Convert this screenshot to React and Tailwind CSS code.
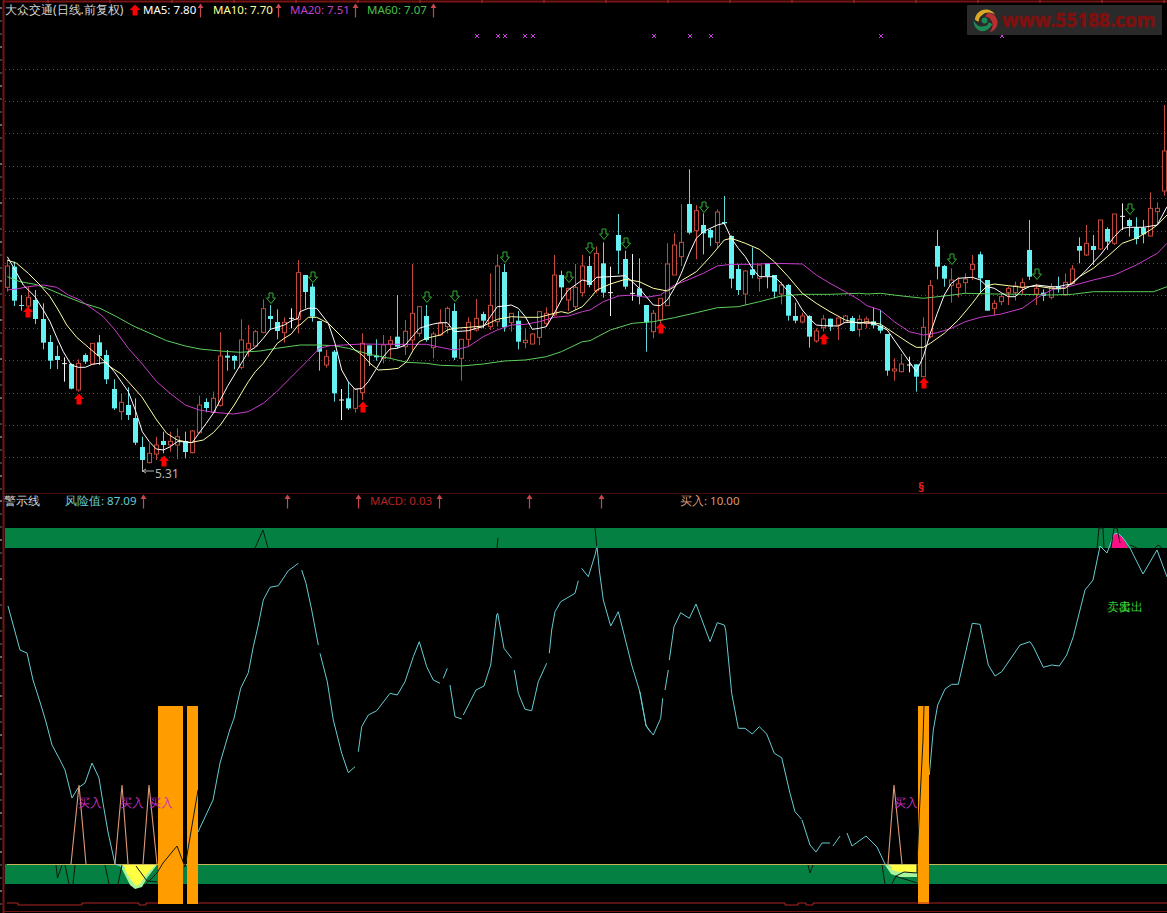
import React from "react";

// candle rows are read off 3x crops: [x, kind, bodyTop, bodyBottom, wickTop, wickBottom]
const fromCrop = (ox, oy, rows) =>
  rows.map(([x, k, a, b, c, d]) => ({
    x: Math.round(ox + x / 3),
    k,
    a: oy + a / 3,
    b: oy + b / 3,
    c: oy + c / 3,
    d: oy + d / 3,
  }));

const candles = [
  ...fromCrop(0, 250, [
    [22, "r", 48, 112, 30, 125], [43, "c", 50, 152, 35, 168], [64, "c", 165, 168, 135, 182], [85, "r", 142, 168, 110, 175],
    [106, "c", 150, 207, 120, 222], [130, "c", 207, 278, 160, 298], [151, "c", 276, 332, 255, 357], [172, "c", 318, 330, 287, 357],
    [193, "w", 341, 343, 322, 395], [214, "c", 342, 416, 340, 418], [235, "r", 340, 420, 328, 425], [256, "c", 315, 335, 310, 342],
    [277, "r", 280, 342, 280, 342], [298, "c", 277, 318, 255, 345], [319, "c", 315, 388, 300, 402], [343, "c", 417, 475, 388, 480],
    [364, "r", 457, 485, 430, 510], [385, "c", 465, 495, 412, 510], [406, "c", 504, 578, 445, 585], [427, "c", 591, 630, 560, 660],
    [448, "r", 610, 638, 580, 640], [469, "r", 585, 612, 560, 630], [490, "c", 573, 585, 545, 610], [511, "r", 574, 585, 545, 605],
    [532, "r", 560, 585, 535, 628], [556, "c", 574, 606, 545, 625], [577, "r", 543, 608, 540, 610], [598, "r", 465, 548, 437, 550],
    [619, "c", 456, 474, 445, 487], [640, "r", 445, 487, 425, 490], [661, "r", 318, 466, 247, 470], [682, "c", 317, 323, 300, 362],
    [703, "c", 318, 332, 315, 358], [724, "r", 270, 352, 208, 358], [745, "r", 280, 297, 225, 320], [766, "r", 245, 288, 240, 290],
    [790, "r", 176, 247, 148, 250], [811, "c", 198, 207, 165, 240], [832, "c", 216, 243, 178, 268], [853, "r", 217, 248, 202, 278],
    [874, "w", 205, 208, 175, 235], [895, "r", 68, 208, 30, 250],
  ]),
  ...fromCrop(300, 200, [
    [16, "c", 225, 276, 225, 325], [37, "c", 260, 350, 250, 365], [58, "c", 363, 455, 363, 512], [79, "r", 470, 495, 450, 503],
    [103, "c", 455, 580, 450, 605], [124, "w", 600, 602, 567, 660], [145, "c", 595, 625, 545, 630], [166, "r", 567, 625, 567, 638],
    [187, "r", 430, 578, 400, 600], [208, "c", 436, 467, 436, 498], [229, "c", 467, 472, 418, 482], [250, "r", 435, 475, 405, 490],
    [271, "r", 422, 432, 408, 475], [292, "c", 410, 440, 285, 445], [316, "r", 394, 440, 360, 465], [337, "r", 340, 420, 192, 450],
    [358, "r", 320, 400, 318, 410], [379, "c", 348, 420, 315, 425], [400, "r", 402, 443, 395, 475], [421, "r", 370, 405, 328, 408],
    [442, "r", 325, 380, 320, 400], [463, "c", 333, 473, 310, 480], [484, "r", 418, 475, 418, 542], [505, "r", 367, 418, 352, 440],
    [529, "r", 355, 390, 297, 395], [550, "c", 342, 362, 335, 385], [571, "r", 316, 380, 220, 390], [592, "r", 198, 365, 163, 380],
    [613, "c", 216, 382, 192, 395], [634, "r", 340, 368, 340, 395], [655, "c", 362, 425, 333, 448], [676, "r", 421, 428, 385, 445],
    [697, "r", 402, 432, 400, 433], [718, "r", 335, 412, 335, 435], [739, "r", 340, 370, 322, 380], [763, "r", 225, 345, 165, 350],
    [784, "c", 225, 262, 212, 300], [805, "r", 265, 300, 265, 333], [826, "r", 262, 320, 192, 330], [847, "r", 198, 278, 165, 290],
    [868, "c", 198, 255, 168, 262],
  ]),
  ...fromCrop(590, 160, [
    [19, "r", 280, 392, 260, 400], [40, "c", 310, 398, 247, 413], [61, "w", 398, 400, 320, 468], [85, "c", 225, 272, 162, 342],
    [106, "c", 297, 380, 272, 388], [127, "w", 400, 402, 282, 422], [148, "c", 385, 410, 295, 433], [169, "c", 435, 487, 435, 575],
    [190, "r", 460, 515, 450, 535], [211, "r", 415, 480, 415, 490], [232, "r", 312, 437, 250, 438], [253, "r", 255, 345, 220, 345],
    [274, "r", 247, 290, 133, 318], [298, "c", 132, 218, 28, 223], [319, "r", 152, 212, 135, 298], [340, "c", 195, 220, 160, 283],
    [361, "c", 210, 233, 205, 258], [382, "r", 156, 248, 148, 265], [403, "c", 186, 190, 108, 195], [424, "c", 228, 356, 226, 385],
    [445, "c", 327, 390, 315, 405], [466, "r", 333, 402, 330, 435], [487, "c", 328, 345, 262, 355], [508, "r", 315, 355, 315, 395],
    [532, "c", 310, 348, 310, 385], [553, "c", 345, 395, 345, 415], [574, "r", 375, 402, 365, 433], [595, "c", 375, 467, 372, 482],
    [616, "c", 468, 482, 428, 490], [637, "r", 468, 486, 458, 490], [658, "c", 468, 530, 465, 563], [679, "r", 513, 543, 505, 548],
    [700, "r", 477, 503, 465, 515], [721, "c", 476, 500, 476, 513], [745, "r", 474, 495, 474, 540], [766, "r", 468, 487, 465, 490],
    [787, "c", 474, 513, 468, 515], [808, "r", 478, 508, 465, 530], [829, "r", 477, 490, 470, 505], [850, "c", 484, 496, 443, 505],
    [871, "c", 497, 512, 450, 520],
  ]),
  ...fromCrop(867, 140, [
    [61, "c", 582, 692, 582, 707], [82, "r", 687, 693, 655, 722], [103, "r", 672, 695, 642, 697], [127, "w", 675, 677, 650, 697],
    [148, "c", 673, 710, 673, 755], [169, "r", 562, 710, 532, 712], [190, "r", 437, 590, 420, 595], [211, "c", 318, 380, 270, 418],
    [232, "c", 378, 416, 375, 440], [253, "r", 420, 436, 385, 488], [274, "r", 432, 442, 412, 472], [295, "r", 417, 428, 400, 460],
    [316, "r", 373, 388, 345, 420], [340, "c", 343, 415, 335, 458], [361, "c", 420, 512, 420, 512], [382, "r", 490, 505, 480, 525],
    [403, "r", 470, 485, 460, 495], [424, "r", 445, 458, 440, 495], [445, "r", 438, 458, 425, 482], [466, "r", 428, 443, 415, 462],
    [487, "c", 330, 410, 240, 420], [508, "r", 445, 462, 432, 495], [529, "c", 458, 468, 448, 483], [553, "r", 442, 472, 430, 478],
    [574, "c", 440, 448, 410, 458], [595, "r", 427, 465, 400, 465], [616, "r", 387, 430, 375, 432], [637, "c", 318, 332, 292, 370],
    [658, "r", 310, 345, 255, 348], [679, "c", 318, 330, 285, 375], [700, "r", 240, 327, 240, 330], [721, "c", 267, 305, 262, 330],
    [742, "r", 222, 310, 222, 315], [766, "w", 229, 231, 190, 270], [787, "c", 240, 258, 235, 290], [808, "c", 262, 297, 232, 313],
    [829, "c", 263, 283, 240, 310], [850, "r", 205, 288, 157, 290], [871, "r", 205, 215, 187, 252], [892, "r", 33, 153, -105, 167],
  ]),
];

// joins the per-crop traces, later crop wins where two overlap
const trace = (parts) => {
  let pts = [];
  parts.forEach(([ox, oy, rows]) => {
    const next = rows.map(([x, y]) => [ox + x / 3, oy + y / 3]);
    pts = pts.filter((p) => p[0] < next[0][0]).concat(next);
  });
  return pts.map((p) => p[0].toFixed(1) + "," + p[1].toFixed(1)).join(" ");
};

const ma5 = trace([
  [0, 250, [[22, 20], [45, 60], [70, 105], [105, 140], [130, 180], [150, 215], [170, 262], [190, 305], [214, 345], [235, 352], [256, 352], [277, 343], [298, 340], [319, 337], [343, 365], [364, 395], [385, 425], [406, 480], [427, 545], [448, 575], [469, 597], [490, 600], [511, 590], [532, 575], [556, 575], [577, 578], [598, 548], [619, 520], [640, 490], [661, 450], [682, 410], [703, 375], [724, 340], [745, 305], [766, 292], [790, 265], [811, 238], [832, 232], [853, 225], [874, 212], [895, 205]]],
  [300, 200, [[0, 335], [25, 325], [50, 325], [85, 370], [105, 430], [125, 510], [145, 545], [165, 568], [187, 565], [205, 545], [230, 505], [250, 470], [270, 447], [292, 445], [316, 435], [337, 410], [358, 385], [379, 378], [400, 372], [421, 368], [442, 368], [463, 395], [505, 392], [529, 385], [550, 380], [571, 350], [592, 320], [613, 318], [634, 315], [655, 325], [676, 350], [697, 388], [718, 385], [739, 380], [763, 340], [784, 300], [805, 270], [826, 255], [847, 240], [868, 245]]],
  [590, 160, [[0, 372], [20, 352], [60, 350], [106, 347], [127, 365], [148, 385], [169, 410], [190, 435], [211, 437], [232, 420], [253, 385], [274, 340], [298, 280], [319, 235], [340, 215], [361, 205], [382, 195], [403, 190], [424, 235], [445, 265], [466, 290], [487, 325], [508, 350], [532, 350], [553, 350], [574, 370], [595, 395], [616, 415], [637, 450], [658, 475], [679, 495], [700, 497], [745, 498], [766, 487], [787, 487], [850, 490]]],
  [867, 140, [[61, 570], [127, 665], [148, 695], [169, 650], [190, 580], [211, 520], [232, 465], [253, 430], [274, 415], [316, 412], [340, 420], [361, 440], [382, 445], [403, 458], [424, 470], [445, 470], [466, 450], [487, 440], [508, 435], [553, 440], [574, 440], [595, 435], [616, 432], [658, 390], [700, 345], [742, 290], [766, 265], [787, 262], [829, 262], [871, 255], [900, 200]]],
]);

const ma10 = trace([
  [0, 250, [[22, 30], [50, 40], [85, 70], [120, 105], [150, 140], [175, 180], [200, 225], [230, 262], [265, 292], [298, 320], [330, 350], [364, 372], [385, 395], [425, 440], [470, 510], [500, 550], [532, 570], [570, 578], [610, 570], [640, 548], [661, 525], [682, 495], [703, 465], [724, 430], [745, 395], [766, 365], [790, 340], [811, 310], [832, 280], [853, 265], [874, 252], [895, 225]]],
  [300, 200, [[0, 375], [25, 352], [50, 352], [85, 370], [120, 405], [165, 450], [187, 465], [210, 490], [235, 510], [270, 508], [295, 505], [320, 485], [340, 450], [358, 425], [379, 415], [421, 405], [442, 390], [463, 385], [505, 382], [550, 378], [592, 358], [634, 350], [676, 352], [718, 352], [763, 340], [784, 335], [805, 340], [847, 320]]],
  [590, 160, [[0, 415], [20, 390], [61, 372], [106, 358], [148, 365], [190, 385], [232, 393], [253, 380], [274, 362], [319, 335], [361, 290], [403, 240], [424, 235], [466, 250], [508, 268], [553, 305], [595, 350], [637, 400], [679, 430], [720, 455], [766, 480], [808, 490], [850, 490]]],
  [867, 140, [[0, 545], [40, 552], [82, 580], [127, 610], [148, 622], [169, 622], [190, 610], [232, 580], [274, 540], [316, 490], [340, 458], [361, 437], [382, 432], [424, 437], [466, 442], [508, 438], [553, 445], [595, 445], [637, 410], [679, 385], [721, 350], [766, 310], [808, 295], [850, 270], [871, 255], [900, 225]]],
]);

const ma20 = trace([
  [0, 250, [[22, 120], [45, 118], [85, 110], [130, 105], [170, 112], [205, 135], [240, 150], [275, 175], [310, 200], [345, 240], [385, 295], [425, 340], [470, 395], [510, 430], [556, 465], [598, 480], [640, 487], [700, 492], [745, 485], [790, 460], [830, 425], [870, 385], [900, 350]]],
  [300, 200, [[0, 505], [25, 480], [58, 445], [90, 437], [130, 435], [187, 432], [250, 433], [316, 433], [379, 433], [421, 442], [463, 450], [505, 440], [550, 410], [592, 390], [634, 375], [676, 373], [718, 365], [763, 352], [805, 348], [847, 335]]],
  [590, 160, [[0, 450], [40, 425], [85, 408], [127, 405], [169, 412], [211, 405], [253, 375], [298, 358], [340, 340], [382, 318], [424, 313], [487, 313], [553, 310], [637, 312], [679, 345], [720, 370], [766, 395], [808, 420], [850, 440]]],
  [867, 140, [[0, 497], [40, 510], [82, 545], [127, 575], [169, 585], [211, 578], [253, 565], [295, 545], [340, 532], [403, 522], [466, 505], [508, 475], [553, 450], [616, 437], [679, 420], [742, 405], [808, 375], [871, 340], [900, 310]]],
]);

const ma60 = trace([
  [0, 250, [[22, 80], [60, 95], [105, 103], [140, 115], [200, 140], [250, 160], [300, 175], [350, 200], [400, 228], [450, 250], [500, 272], [556, 288], [600, 297], [661, 303], [720, 307], [780, 303], [830, 295], [900, 285]]],
  [300, 200, [[0, 435], [58, 435], [103, 437], [145, 445], [208, 463], [270, 475], [320, 487], [379, 490], [421, 496], [484, 498], [550, 492], [613, 483], [676, 480], [739, 470], [784, 455], [847, 425]]],
  [590, 160, [[0, 542], [61, 510], [127, 490], [190, 485], [253, 473], [319, 458], [382, 443], [445, 440], [508, 425], [574, 408], [637, 403], [720, 403], [808, 400], [850, 403]]],
  [867, 140, [[0, 462], [40, 460], [106, 468], [169, 475], [232, 468], [295, 460], [382, 462], [466, 463], [553, 465], [616, 463], [679, 455], [766, 455], [860, 455], [900, 440]]],
]);

const redArrows = [[28, 312], [79, 399], [164, 461], [363, 407], [661, 328], [824, 339], [924, 383]];
const greenArrows = [[271, 298], [313, 277], [427, 297], [455, 296], [505, 257], [569, 277], [590, 248], [604, 234], [626, 243], [704, 207], [952, 259], [1037, 274], [1130, 209]];
const crosses = [477, 498, 505, 525, 533, 654, 690, 711, 881, 1002];
const gridLines = Array.from({ length: 13 }, (_, i) => 68.5 + i * 32.4);
const topTicks = Array.from({ length: 19 }, (_, i) => 916 - 62 * (14 - i));
const leftTicks = Array.from({ length: 70 }, (_, i) => 8 + i * 13);

// the line has small breaks in the picture, so it is kept as separate pieces
const crop = (ox, oy, rows) => rows.map(([x, y]) => (ox + x / 3).toFixed(1) + "," + (oy + y / 3).toFixed(1)).join(" ");

const riskLine = [
  "8,606 14,628 20,650 27,653 33,680 40,702 46,722 52,745 60,760 65,770 72,798 78,788 85,783 92,763 99,778 103,803 108,832 115,864 125,868",
  "198,832 213,800 220,763 230,729",
  crop(230, 550, [[0, 538], [12, 505], [32, 415], [55, 368], [70, 290], [85, 225], [100, 150], [120, 112], [145, 107], [175, 62], [205, 40]]),
  crop(230, 550, [[215, 60], [228, 100], [245, 180], [265, 285]]),
  crop(230, 550, [[270, 310], [292, 395], [310, 510], [335, 610], [355, 668], [375, 650]]),
  crop(230, 550, [[385, 605], [395, 530], [415, 495], [440, 482], [480, 430], [502, 435], [525, 395], [550, 320], [568, 275], [590, 350], [610, 390], [630, 400]]),
  crop(230, 550, [[640, 385], [652, 355]]),
  crop(230, 550, [[660, 405], [675, 500], [695, 507]]),
  crop(230, 550, [[700, 495], [738, 420], [762, 408], [782, 345], [800, 195], [803, 190], [822, 295], [845, 325]]),
  crop(230, 550, [[853, 360], [865, 430], [885, 478], [905, 482], [925, 395], [950, 340]]),
  crop(230, 550, [[958, 310], [965, 240], [975, 185], [992, 155], [1035, 130], [1045, 92]]),
  crop(230, 550, [[1055, 55], [1075, 80], [1095, 15], [1101, -12], [1108, 60], [1120, 150], [1142, 228], [1165, 185], [1175, 225], [1205, 345], [1228, 420], [1248, 525], [1260, 545]]),
  crop(640, 590, [[0, 305], [18, 408], [40, 435], [62, 385], [68, 325]]),
  crop(640, 590, [[75, 300], [85, 240]]),
  crop(640, 590, [[88, 210], [102, 110], [122, 68], [148, 85], [168, 42], [210, 155], [232, 98], [253, 105], [257, 120], [275, 310], [295, 415], [315, 415], [337, 432], [358, 410], [380, 432], [403, 490], [425, 503], [450, 610], [465, 665], [485, 688]]),
  "802,820 810,845 816,852 822,843 830,843",
  "833,846 840,836",
  "847,833 852,846 866,836 877,847 885,864 892,868",
  crop(640, 590, [[868, 555], [880, 420], [893, 345], [915, 297], [935, 283], [955, 283], [997, 100], [1020, 103], [1045, 225], [1065, 258], [1085, 245], [1140, 165], [1170, 155], [1180, 170], [1210, 232], [1235, 225], [1258, 228], [1280, 195], [1300, 140], [1335, 0]]),
  "1085,590 1093,580 1100,546 1107,553 1114,534 1118,533 1123,538 1130,548 1143,574 1157,550 1167,577",
];

const blackLines = [
  "56,865 57.5,878 62,865",
  "65,865 69,884",
  "73,884 75,865",
  "105,865 109,884",
  "118,884 122,865",
  "136,866 147,881 157,882",
  "142,888 157,873 163,863 177,846 185,867 198,790",
  "255,548 263,530 268,548",
  "497,548 498,538",
  "595,528 597,548",
  "808,865 810,873 813,865",
  "882,865 885,884",
  "892,884 896,876 904,872 917,873 917,864 919,820 923,740 924,706",
  "895,876 917,883",
  "1097,548 1099,528 1103,528 1104,548",
  "1111,548 1114,528 1117,528 1120,543",
  "1130,545 1137,548",
  "1155,548 1158,545 1162,548",
];

const buyPeaks = [[71, 79, 86], [115, 122, 128], [143, 149, 157], [888, 894, 902]];

function Candle({ x, k, a, b, c, d }) {
  const cx = x + 0.5;
  if (k === "c") {
    return (
      <g>
        <line x1={cx} x2={cx} y1={c} y2={d} stroke="#63d8dc" />
        <rect x={x - 2} y={a} width={5} height={Math.max(b - a, 1)} fill="#66f2f2" />
      </g>
    );
  }
  if (k === "w") {
    return (
      <g>
        <line x1={cx} x2={cx} y1={c} y2={d} stroke="#f2f2f2" />
        <line x1={x - 2} x2={x + 3} y1={a} y2={a} stroke="#f2f2f2" />
      </g>
    );
  }
  return (
    <g>
      <line x1={cx} x2={cx} y1={c} y2={d} stroke="#c2493d" />
      <rect x={x - 1.5} y={a} width={4} height={b - a} fill="#000" stroke="#c2493d" />
    </g>
  );
}

function UpTick({ className = "" }) {
  return (
    <svg viewBox="0 0 7 15" className={"w-[7px] h-[15px] shrink-0 " + className}>
      <path d="M3.5 1.5V14.5" stroke="#c8474c" strokeWidth="1.2" />
      <path d="M3.5 0.5L6.5 5H0.5Z" fill="#c8474c" />
    </svg>
  );
}

function PriceChart() {
  return (
    <svg viewBox="0 0 1167 493" className="absolute inset-0 w-[1167px] h-[493px]">
      <line x1="3" x2="1167" y1="1.5" y2="1.5" stroke="#7a1414" strokeWidth="2" />
      <line x1="3.5" x2="3.5" y1="0" y2="493" stroke="#7a1414" strokeWidth="2" />
      {topTicks.map((x) => (
        <line key={x} x1={x} x2={x} y1="0" y2="3" stroke="#a83030" />
      ))}
      {leftTicks.map((y, i) => (
        <line key={y} x1="0" x2="2" y1={y} y2={y} stroke={i % 3 === 0 ? "#cccccc" : "#777777"} />
      ))}
      {gridLines.map((y) => (
        <line key={y} x1="5" x2="1167" y1={Math.round(y) + 0.5} y2={Math.round(y) + 0.5} stroke="#a8301c" strokeDasharray="1 3" />
      ))}
      {crosses.map((x) => (
        <path key={x} d={`M${x - 2} 34L${x + 2} 38M${x + 2} 34L${x - 2} 38`} stroke="#d040e0" />
      ))}
      {candles.map((c, i) => (
        <Candle key={i} {...c} />
      ))}
      <polyline points={ma60} fill="none" stroke="#5ccf5c" />
      <polyline points={ma20} fill="none" stroke="#c93ccc" />
      <polyline points={ma10} fill="none" stroke="#ffffa8" />
      <polyline points={ma5} fill="none" stroke="#ffffff" />
      {redArrows.map(([x, y]) => (
        <path key={x} transform={`translate(${x} ${y})`} d="M0 -5.5L5 0H2.5V5.5H-2.5V0H-5Z" fill="#ff0000" />
      ))}
      {greenArrows.map(([x, y]) => (
        <path key={x} transform={`translate(${x} ${y})`} d="M-2 -5H2V0H4.5L0 5.5L-4.5 0H-2Z" fill="none" stroke="#2fae2f" />
      ))}
      <path d="M142.5 460V472M142.5 471H154M142.5 471L146 469M142.5 471L146 473" fill="none" stroke="#b0b0b0" />
    </svg>
  );
}

function RiskChart() {
  return (
    <svg viewBox="0 493 1167 420" className="absolute inset-0 w-[1167px] h-[420px]">
      <line x1="3.5" x2="3.5" y1="493" y2="913" stroke="#7a1414" strokeWidth="2" />
      {leftTicks.slice(0, 32).map((y, i) => (
        <line key={y} x1="0" x2="2" y1={y + 493} y2={y + 493} stroke={i % 3 === 0 ? "#cccccc" : "#777777"} />
      ))}
      <line x1="3" x2="1167" y1="493" y2="493" stroke="#8a1a1a" />
      <line x1="3" x2="1167" y1="911.5" y2="911.5" stroke="#7a1414" />
      <rect x="5" y="528" width="1162" height="20" fill="#058043" />
      <rect x="5" y="864" width="1162" height="20" fill="#058043" />
      <line x1="7" x2="1167" y1="864.5" y2="864.5" stroke="#c8b45a" />
      <path d="M120 865H157L147 878L142 887L135 889L130 885Z" fill="#a6f59a" />
      <path d="M122 865H155L145 876L140 884L136 886L131 880Z" fill="#ffff44" />
      <path d="M885 865H917V877H899L891 874Z" fill="#a6f59a" />
      <path d="M888 865H917V872H899L892 870Z" fill="#ffff44" />
      <path d="M1111 548L1114 534L1118 533L1123 538L1128 548Z" fill="#ff0f85" />
      {riskLine.map((p) => (
        <polyline key={p} points={p} fill="none" stroke="#66ccd2" />
      ))}
      {buyPeaks.map(([a, b, c]) => (
        <polyline key={a} points={`${a},864 ${b},785 ${c},864`} fill="none" stroke="#e09a78" strokeWidth="1.1" />
      ))}
      <rect x="158" y="706" width="25" height="198" fill="#ff9c00" />
      <rect x="187" y="706" width="11" height="198" fill="#ff9c00" />
      <rect x="918" y="706" width="11" height="198" fill="#ff9c00" />
      {blackLines.map((p) => (
        <polyline key={p} points={p} fill="none" stroke="#101810" />
      ))}
      <polyline points="7,903 18,903 18,905 82,905 82,903 139,903 139,905 146,905 146,903 158,903" fill="none" stroke="#b02424" />
      <polyline points="198,903 785,903 785,905 798,905 798,903 806,903 806,905 813,905 813,903 1167,903" fill="none" stroke="#b02424" />
    </svg>
  );
}

function Logo() {
  return (
    <div className="absolute left-[967px] top-[5px] flex h-[30px] w-[195px] items-center gap-[3px] bg-[#2a2a2a] pl-[5px]">
      <svg viewBox="0 0 28 28" className="h-[27px] w-[27px] shrink-0">
        <path d="M3 13C4 5 11 1 18 3C21 4 23 6 24 8C20 5 14 5 11 8C8 10 7 12 7 15C5 15 4 14 3 13Z" fill="#d9a825" />
        <path d="M17 6C24 7 28 13 26 19C25 23 21 26 18 26C22 22 22 17 20 14C18 11 16 10 14 10C14 8 16 7 17 6Z" fill="#b53030" />
        <path d="M21 18C18 24 12 27 7 24C3 22 1 17 2 14C4 19 8 21 12 20C15 20 17 18 17 16C19 16 20 17 21 18Z" fill="#1d8a55" />
        <circle cx="13" cy="14" r="3" fill="#1d8a55" />
      </svg>
      <span className="font-['Liberation_Sans',Arial,sans-serif] text-[19px] leading-none font-bold text-[#7f1010] [-webkit-text-stroke:0.6px_#7f1010]">
        www.55188.com
      </span>
    </div>
  );
}

const App = () => {
  return (
    <div className="flex h-[913px] w-[1167px] flex-col overflow-hidden bg-black font-['Liberation_Sans','Noto_Sans_CJK_SC',sans-serif] text-[11.5px] leading-none">
      <div className="relative h-[493px] shrink-0">
        <PriceChart />
        <Logo />
        <div className="relative flex h-[20px] items-center pl-[5px]">
          <span className="w-[124px] text-[12px] text-[#d6d6d6]">大众交通(日线.前复权)</span>
          <svg viewBox="0 0 12 12" className="h-[12px] w-[12px] shrink-0">
            <path d="M6 0.5L11.5 6H8.5V11.5H3.5V6H0.5Z" fill="#ff0000" />
          </svg>
          <span className="ml-[2px] w-[54px] text-white">MA5: 7.80</span>
          <UpTick />
          <span className="ml-[9px] w-[62px] text-[#ffff9c]">MA10: 7.70</span>
          <UpTick />
          <span className="ml-[8px] w-[62px] text-[#c040c8]">MA20: 7.51</span>
          <UpTick />
          <span className="ml-[8px] w-[63px] text-[#48c048]">MA60: 7.07</span>
          <UpTick />
        </div>
        <span className="absolute left-[155px] top-[468px] text-[12px] text-[#b8b8b8]">5.31</span>
        <span className="absolute left-[918px] top-[481px] text-[13px] font-bold text-[#e02020]">§</span>
      </div>
      <div className="relative flex-1">
        <RiskChart />
        <div className="relative flex h-[15px] items-center pl-[4px] pt-[1px]">
          <span className="w-[61px] text-[12px] text-[#d6d6d6]">警示线</span>
          <span className="w-[75px] text-[#66ccd2]">
            <span className="text-[12px]">风险值</span>: 87.09
          </span>
          <UpTick className="mt-[1px]" />
          <UpTick className="ml-[137px] mt-[1px]" />
          <UpTick className="ml-[64px] mt-[1px]" />
          <span className="ml-[8px] w-[66px] text-[#b82222]">MACD: 0.03</span>
          <UpTick className="mt-[1px]" />
          <UpTick className="ml-[83px] mt-[1px]" />
          <UpTick className="ml-[65px] mt-[1px]" />
          <span className="ml-[75px] text-[#d89a78]">
            <span className="text-[12px]">买入</span>: 10.00
          </span>
        </div>
        <span className="absolute left-[78px] top-[304px] text-[12px] text-[#c030c0]">买入</span>
        <span className="absolute left-[120px] top-[304px] text-[12px] text-[#c030c0]">买入</span>
        <span className="absolute left-[149px] top-[304px] text-[12px] text-[#c030c0]">买入</span>
        <span className="absolute left-[894px] top-[304px] text-[12px] text-[#c030c0]">买入</span>
        <span className="absolute left-[1107px] top-[108px] text-[12px] text-[#38d038]">卖出</span>
        <span className="absolute left-[1119px] top-[108px] text-[12px] text-[#38d038]">卖出</span>
      </div>
    </div>
  );
};

export default App;
